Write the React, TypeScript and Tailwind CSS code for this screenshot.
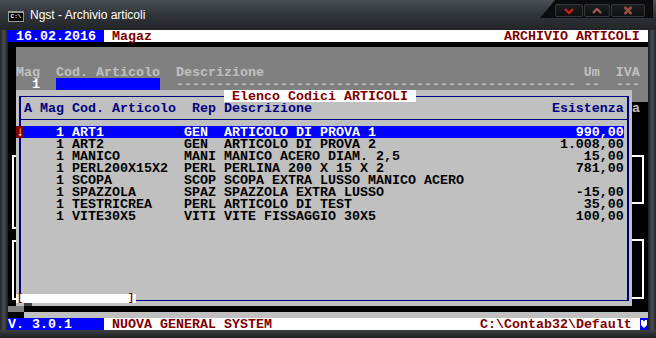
import React from "react";

const mono =
  "font-['Liberation_Mono','DejaVu_Sans_Mono',monospace] font-bold text-[13.3333px] leading-[14px] whitespace-pre";

const items: [string, string, string, string][] = [
  ["ART1", "GEN", "ARTICOLO DI PROVA 1", "990,00"],
  ["ART2", "GEN", "ARTICOLO DI PROVA 2", "1.008,00"],
  ["MANICO", "MANI", "MANICO ACERO DIAM. 2,5", "15,00"],
  ["PERL200X15X2", "PERL", "PERLINA 200 X 15 X 2", "781,00"],
  ["SCOPA", "SCOP", "SCOPA EXTRA LUSSO MANICO ACERO", ""],
  ["SPAZZOLA", "SPAZ", "SPAZZOLA EXTRA LUSSO", "-15,00"],
  ["TESTRICREA", "PERL", "ARTICOLO DI TEST", "35,00"],
  ["VITE30X5", "VITI", "VITE FISSAGGIO 30X5", "100,00"],
];

// one list line, 75 columns wide (screen cols 2..76)
function line(code: string, rep: string, desc: string, amt: string) {
  const left = "    1 " + code.padEnd(14) + rep.padEnd(5) + desc;
  return left.padEnd(75 - amt.length) + amt;
}

function Row({ className = "", children }: { className?: string; children?: React.ReactNode }) {
  return <div className={"flex h-[12px] " + className}>{children}</div>;
}

function TitleBar() {
  return (
    <div className="h-[30px] flex items-start bg-gradient-to-b from-[#4a4f54] via-[#303438] to-[#222528]">
      <div className="ml-[8px] mt-[11px] w-[16px] h-[11px] border border-[#9a9a9a] border-t-2 bg-black flex items-center justify-center">
        <span className="text-[6px] leading-[6px] text-white font-['Liberation_Mono',monospace] font-bold">C:\</span>
      </div>
      <div className="ml-[6px] mt-[8px] text-[12px] leading-[14px] text-white font-['Liberation_Sans',Arial,sans-serif]">
        Ngst - Archivio articoli
      </div>
      <div className="ml-auto mr-[3px] h-[18px] w-[113px] bg-[#0b0c0d] [clip-path:polygon(15px_0,100%_0,100%_100%,0_100%)] flex pl-[15px] pt-[4px] gap-px">
        <div className="w-[28px] h-[13px] rounded-[2px] border border-[#34373a] bg-gradient-to-b from-[#1c1e20] to-[#0e0f10] flex items-center justify-center">
          <svg width="10" height="6" viewBox="0 0 10 6">
            <path d="M1 1 L5 5 L9 1" stroke="#d01c1c" strokeWidth="2.4" fill="none" />
          </svg>
        </div>
        <div className="w-[26px] h-[13px] rounded-[2px] border border-[#34373a] bg-gradient-to-b from-[#1c1e20] to-[#0e0f10] flex items-center justify-center">
          <svg width="10" height="6" viewBox="0 0 10 6">
            <path d="M1 5 L5 1 L9 5" stroke="#9a5a5a" strokeWidth="2.4" fill="none" />
          </svg>
        </div>
        <div className="w-[34px] h-[13px] rounded-[2px] border border-[#34373a] bg-gradient-to-b from-[#1c1e20] to-[#0e0f10] flex items-center justify-center">
          <svg width="10" height="9" viewBox="0 0 10 9">
            <path d="M1.5 1 L8.5 8 M8.5 1 L1.5 8" stroke="#9a4c44" strokeWidth="2.6" fill="none" />
          </svg>
        </div>
      </div>
    </div>
  );
}

function Dialog() {
  return (
    <div className="absolute left-[8px] top-[60px] w-[616px] h-[216px] bg-[#c0c0c0] pt-[6px] px-[3px] pb-[5px] flex flex-col">
      <div className="relative flex-1 border-x-2 border-y border-[#000080] flex flex-col pt-[5px]">
        <div className="absolute left-[203px] -top-[7px] h-[12px] bg-white text-[#800000] flex">
          {" Elenco Codici ARTICOLI "}
        </div>
        <Row className="pl-[3px] text-[#000080]">
          {"A Mag Cod. Articolo  Rep Descrizione".padEnd(66) + "Esistenza"}
        </Row>
        <div className="mt-[5px] mb-[6px] h-px bg-[#000080]" />
        {items.map(([code, rep, desc, amt], i) => (
          <Row key={code} className="-ml-[5px] relative">
            <span className={i === 0 ? "w-[8px] bg-[#800000] text-white" : "w-[8px]"}>{i === 0 ? "↓" : " "}</span>
            <span className={i === 0 ? "bg-[#0000ff] text-white" : "text-black"}>{line(code, rep, desc, amt)}</span>
          </Row>
        ))}
      </div>
      <div className="absolute left-0 top-[204px] w-[120px] h-[9px] bg-white text-[#800000] text-[10px] leading-[9px] flex justify-between pl-[1px] pr-[2px]">
        <span>[</span>
        <span>]</span>
      </div>
      <div className="absolute left-[8px] top-[213px] w-[8px] h-[3px] bg-[#404040]" />
    </div>
  );
}

function Console() {
  return (
    <div className={`relative w-[640px] h-[300px] bg-black flex flex-col ${mono}`}>
      <Row>
        <span className="bg-[#0000ff] text-white">{" 16.02.2016 "}</span>
        <span className="flex-1 bg-white text-[#800000]">{" Magaz".padEnd(50) + "ARCHIVIO ARTICOLI "}</span>
      </Row>

      <div className="flex h-[60px]">
        <div className="w-[8px]" />
        <div className="flex-1 mt-[5px] bg-[#808080] pt-[19px] text-[#c0c0c0]">
          <Row>{"Mag  Cod. Articolo  Descrizione".padEnd(71) + "Um  IVA"}</Row>
          <Row>
            <span>{"  "}</span>
            <span className="text-white">1</span>
            <span>{"  "}</span>
            <span className="bg-[#0000ff]">{" ".repeat(13)}</span>
            <span>{"  " + "-".repeat(50) + " --  ---"}</span>
          </Row>
        </div>
      </div>

      <div className="flex h-[204px]">
        <div className="w-[8px] flex flex-col pl-[4px]">
          <div className="mt-[53px] h-[74px] border-l-2 border-y-2 border-white" />
          <div className="mt-[11px] h-[60px] border-l-2 border-y-2 border-white" />
        </div>
        <div className="w-[616px]" />
        <div className="w-[16px] flex flex-col text-[#c0c0c0]">
          <Row>a</Row>
          <div className="mt-[41px] h-[49px] w-[12px] border-r-2 border-y-2 border-white" />
          <div className="mt-[35px] h-[60px] w-[12px] border-r-2 border-y-2 border-white" />
        </div>
      </div>

      <div className="flex h-[12px]">
        <div className="w-[16px] flex flex-col">
          <div className="h-[6px] bg-[#808080]" />
          <div className="h-[6px] bg-black" />
        </div>
        <div className="flex-1 flex flex-col">
          <div className="h-[6px] bg-black" />
          <div className="h-[6px] bg-[#c0c0c0]" />
        </div>
      </div>

      <Row>
        <span className="bg-[#0000ff] text-white">{"V. 3.0.1    "}</span>
        <span className="bg-white text-[#800000]">{" NUOVA GENERAL SYSTEM".padEnd(47) + "C:\\Contab32\\Default "}</span>
        <span className="w-[8px] bg-[#0000ff] flex items-center justify-center">
          <svg width="8" height="12" viewBox="0 0 8 12">
            <path d="M1 2 H3 L4 4 L5 2 H7 V7 L4 10 L1 7 Z" fill="white" />
          </svg>
        </span>
      </Row>

      <Dialog />
    </div>
  );
}

export default function App() {
  return (
    <div className="w-[656px] h-[338px] flex flex-col bg-[#2b2e32]">
      <TitleBar />
      <div className="flex">
        <div className="w-[8px] h-[300px] bg-gradient-to-r from-[#222528] via-[#4a4e53] to-[#1a1c1e]" />
        <Console />
        <div className="w-[8px] h-[300px] bg-gradient-to-r from-[#1a1c1e] via-[#4a4e53] to-[#222528]" />
      </div>
      <div className="h-[8px] bg-gradient-to-b from-[#3c4044] to-[#1e2023]" />
    </div>
  );
}
